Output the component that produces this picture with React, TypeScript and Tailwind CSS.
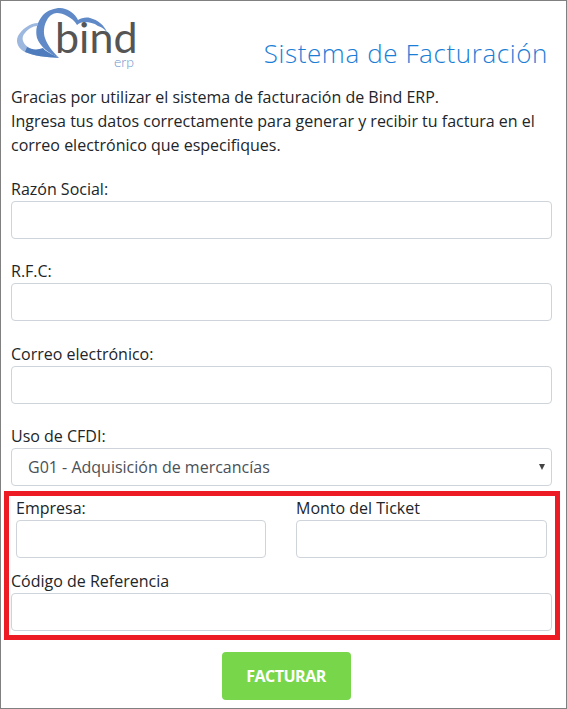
const labelClass = "block text-[16px] leading-[24px] text-[#212529]";
const inputClass = "block w-full h-[38px] rounded-[4px] border border-[#ced4da] bg-white";

function Logo() {
  return (
    <svg width="130" height="70" viewBox="0 0 130 70" className="block">
      {/* back cloud */}
      <path d="M28 18 C20 18 12 24 8 31 C5 38 9 44 15 47 C24 51 36 52 49 53 C38 50 24 47 18 42 C12 38 11 32 15 28 C18 24 23 21 27 21 Z" fill="#9db8de" />
      <path d="M15 47 C24 51 36 52 49 53 C42 49 36 47 33 43 C28 45 22 45 17 42 Z" fill="#4f7cbc" />
      {/* front cloud */}
      <path
        d="M49 53 C40 49 30 42 27 33 C25 25 27 17 33 10 C38 5 45 3 50 3 C57 3 65 8 68 15 C71 13 76 12 80 13 C88 15 94 20 97 27 C94 24 92 22 88 21 C84 18 79 17 75 17 C72 17 69 18 67 20 C65 16 61 13 57 11 C54 9 50 8 47 8 C43 8 39 11 37 15 C34 20 33 27 35 33 C37 39 41 45 49 53 Z"
        fill="#5f8ac7"
      />
      <text x="45" y="48" fontFamily="Lato, sans-serif" fontWeight="400" fontSize="43" fill="#555555">bind</text>
      <text x="104" y="62" fontFamily="Lato, sans-serif" fontWeight="300" fontSize="14" fill="#6d94cc">erp</text>
    </svg>
  );
}

function Field({ label, className }: { label: string; className?: string }) {
  return (
    <div className={className}>
      <label className={labelClass}>{label}</label>
      <input className={inputClass} />
    </div>
  );
}

export default function App() {
  return (
    <div className="w-[567px] h-[709px] overflow-hidden border border-[#808080] bg-white font-['Open_Sans',sans-serif]">
      <div className="flex items-start justify-between pl-[9px] pr-[18px] pt-[4px] h-[84px]">
        <Logo />
        <h1 className="mt-[29px] text-[26px] leading-[38px] font-light tracking-[0.6px] text-[#1b7ed6]">Sistema de Facturación</h1>
      </div>
      <div className="pl-[10px] pr-[14px]">
        <p className="text-[16px] leading-[24px] text-[#212529]">
          Gracias por utilizar el sistema de facturación de Bind ERP.
          <br />
          Ingresa tus datos correctamente para generar y recibir tu factura en el correo electrónico que especifiques.
        </p>
        <div className="mt-[20px] flex flex-col gap-[20.33px]">
          <Field label="Razón Social:" />
          <Field label="R.F.C:" />
          <Field label="Correo electrónico:" />
          <div>
            <label className={labelClass}>Uso de CFDI:</label>
            <div className="relative">
              <div className="flex h-[38px] items-center rounded-[4px] border border-[#ced4da] bg-white pl-[16px] text-[16px] text-[#495057]">
                G01 - Adquisición de mercancías
              </div>
              <svg width="6" height="6" viewBox="0 0 6 6" className="absolute right-[7px] top-[16px]">
                <path d="M0 0H6L3 6Z" fill="#444444" />
              </svg>
            </div>
          </div>
        </div>
      </div>
      <div className="ml-[3px] mt-[5px] w-[556px] border-[5px] border-[#ed1c24] pl-[2px] pr-[3px] pb-[4px]">
        <div className="flex justify-between pl-[5px] pr-[5px]">
          <Field label="Empresa:" className="w-[250px]" />
          <Field label="Monto del Ticket" className="w-[251px]" />
        </div>
        <Field label="Código de Referencia" className="mt-[11px]" />
      </div>
      <div className="mt-[12px] flex justify-center">
        <button className="ml-[5px] h-[48px] w-[129px] rounded-[4px] bg-[#78d64b] text-[16px] font-bold tracking-[-0.5px] text-white">FACTURAR</button>
      </div>
    </div>
  );
}
